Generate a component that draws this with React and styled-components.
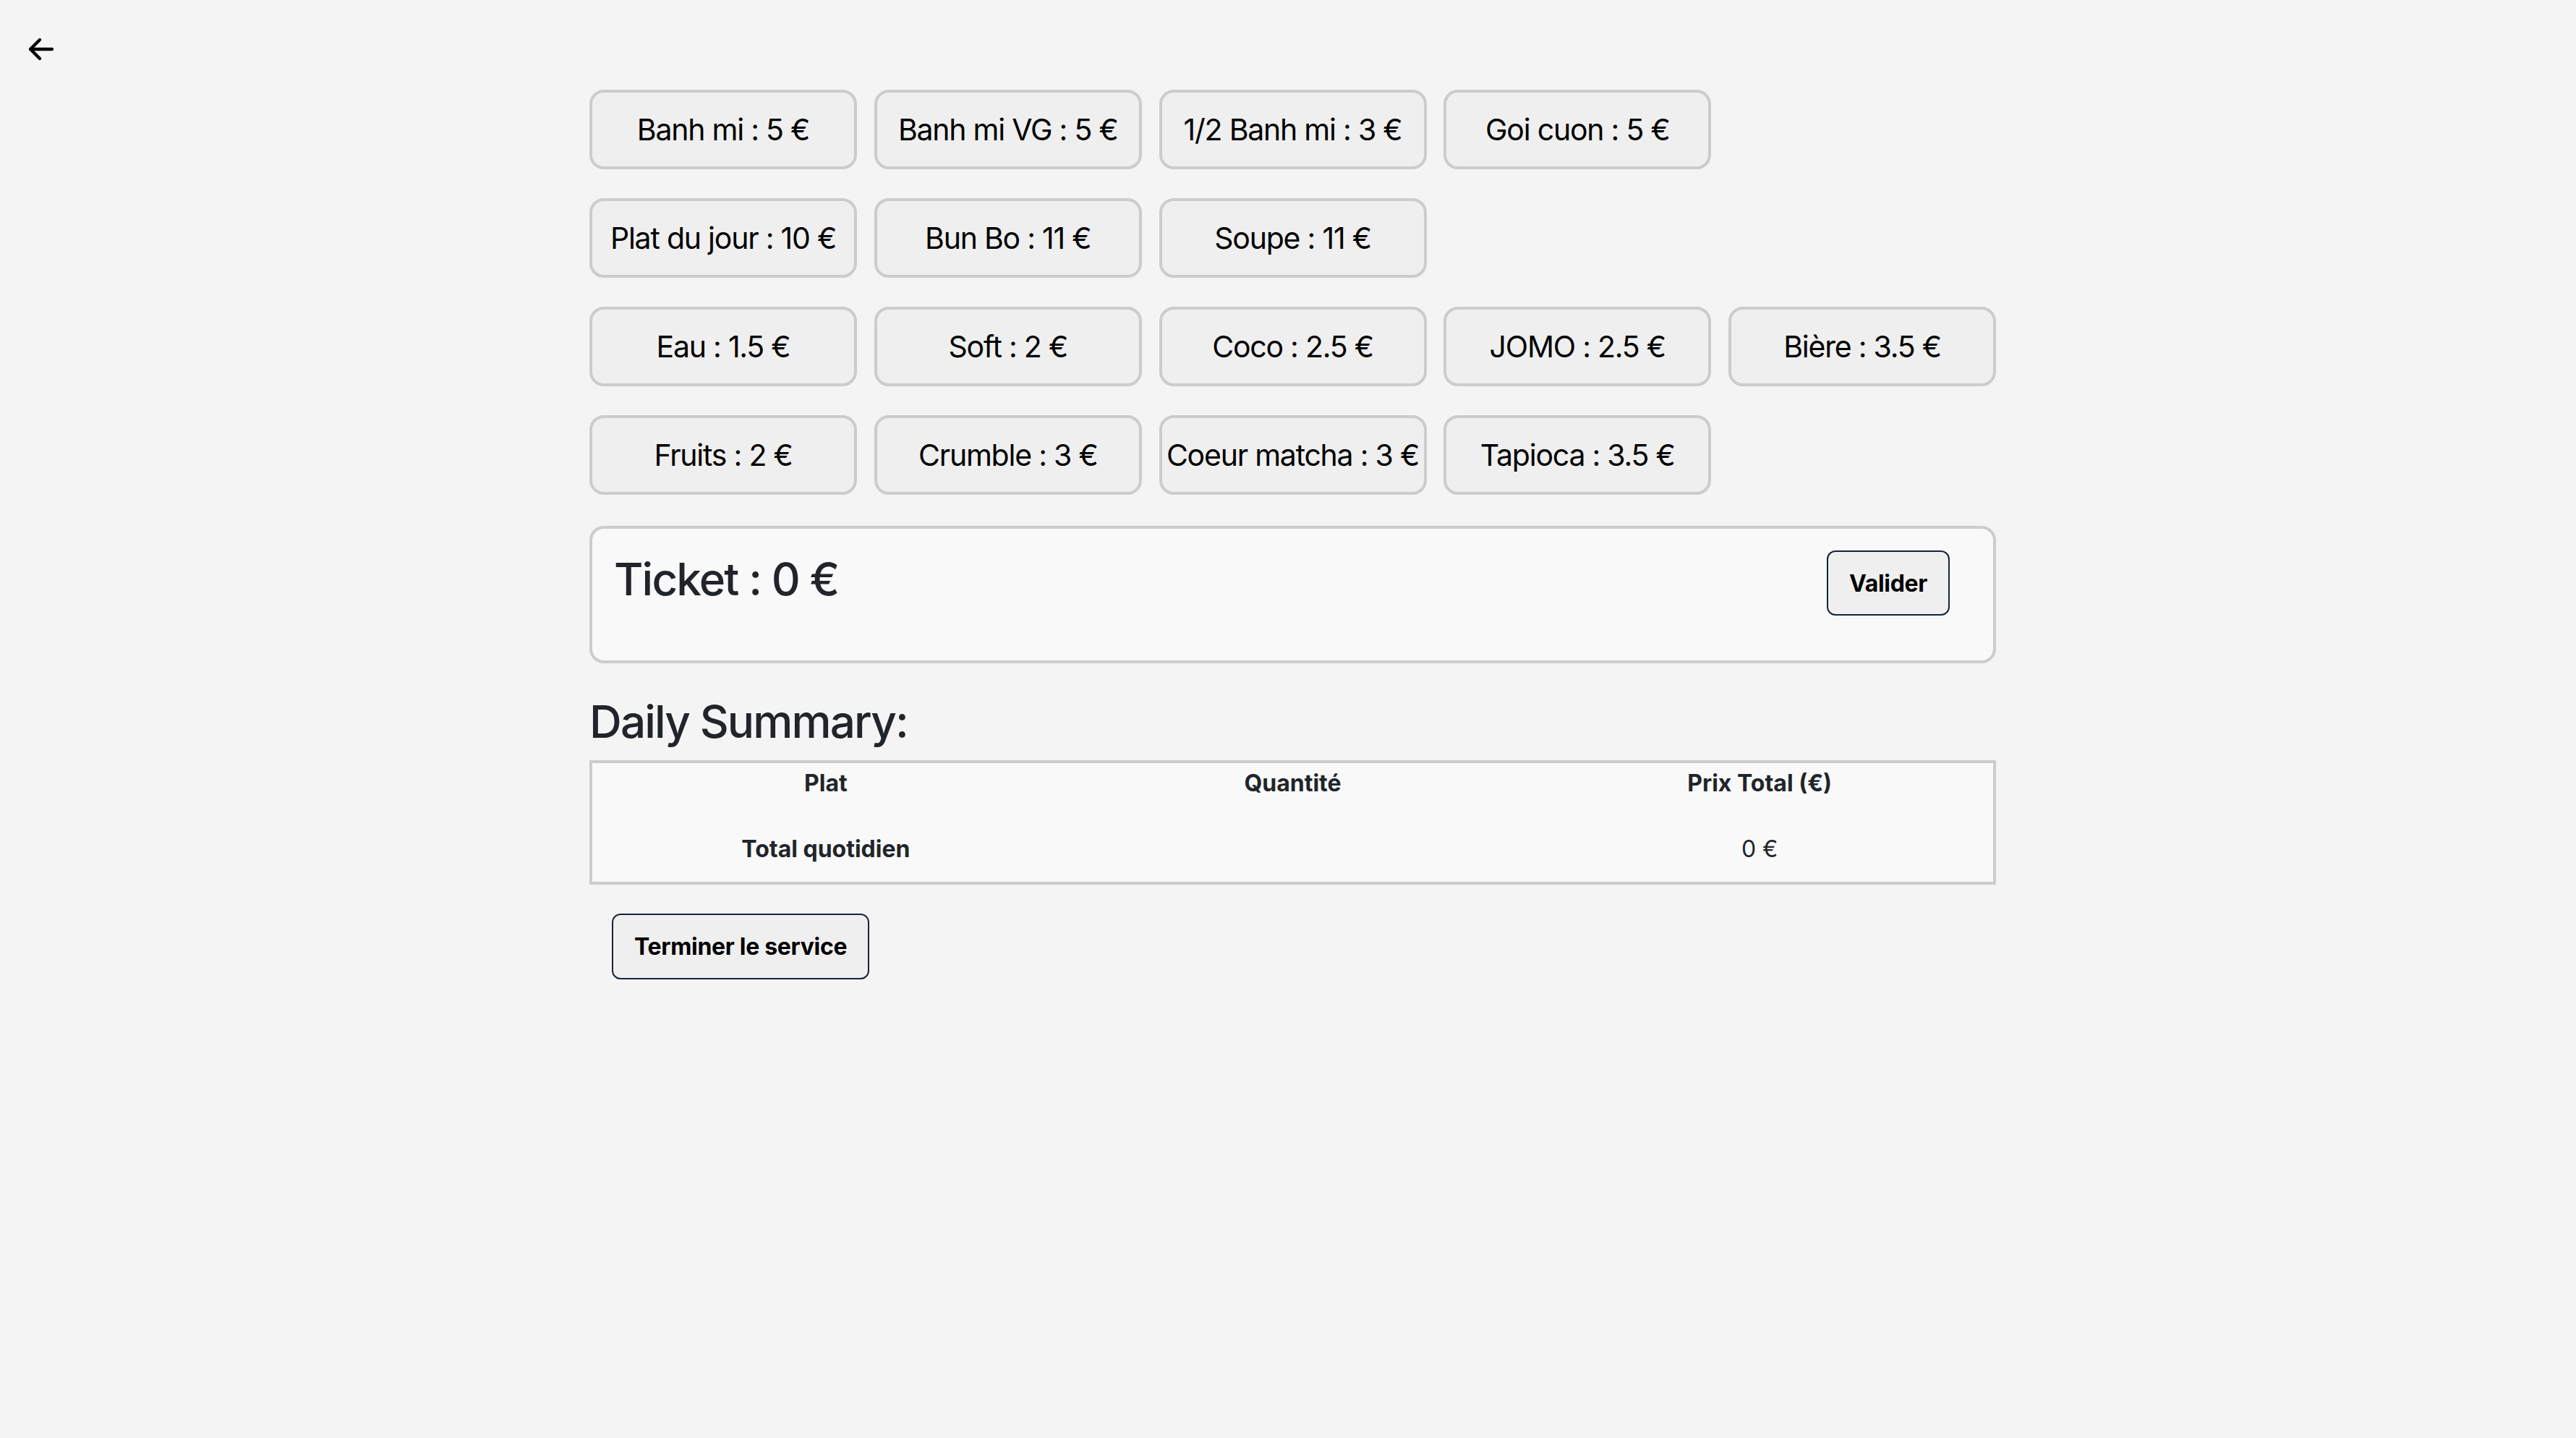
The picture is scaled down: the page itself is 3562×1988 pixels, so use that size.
import React from "react";
import styled, { createGlobalStyle } from "styled-components";

const GlobalStyle = createGlobalStyle`
  html, body {
    margin: 0;
    padding: 0;
    background: #f4f4f4;
    font-family: Inter, "Noto Sans", "Liberation Sans", sans-serif;
    color: #000;
  }
  * { box-sizing: border-box; }
`;

const Page = styled.div`
  min-height: 1988px;
  background: #f4f4f4;
`;

const Header = styled.header`
  display: flex;
  padding: 48px 0 0 37px;
  height: 124px;
`;

const BackButton = styled.button`
  width: 40px;
  height: 40px;
  padding: 0;
  border: none;
  background: transparent;
  cursor: pointer;
  display: flex;
`;

const Main = styled.main`
  width: 1945px;
  margin-left: 815px;
  display: flex;
  flex-direction: column;
`;

const Menu = styled.div`
  display: flex;
  flex-direction: column;
  gap: 40px;
`;

const MenuRow = styled.div`
  display: flex;
  gap: 23.75px;
`;

const ItemButton = styled.button`
  width: 370px;
  height: 110px;
  border: 4px solid #cccccc;
  border-radius: 20px;
  background: #efefef;
  color: #000;
  font-family: Inter, "Noto Sans", sans-serif;
  font-size: 41px;
  letter-spacing: -0.03em;
  padding: 0;
  white-space: nowrap;
  cursor: pointer;
`;

const Ticket = styled.section`
  margin-top: 43px;
  border: 4px solid #cccccc;
  border-radius: 20px;
  background: #f9f9f9;
  padding: 30px;
  display: flex;
  justify-content: space-between;
  align-items: flex-start;
`;

const TicketTitle = styled.h2`
  margin: 2px 0 45px;
  font-size: 62px;
  font-weight: 500;
  letter-spacing: -0.03em;
  color: #212529;
`;

const ActionButton = styled.button`
  height: ${(p) => p.$h}px;
  padding: 0 ${(p) => p.$px}px;
  margin: ${(p) => p.$margin};
  border: 2px solid #18233a;
  border-radius: 12px;
  background: #efefef;
  color: #000;
  font-family: Inter, "Noto Sans", sans-serif;
  font-size: 32px;
  font-weight: 700;
  letter-spacing: -0.01em;
  cursor: pointer;
  align-self: flex-start;
`;

const SectionTitle = styled.h2`
  margin: 43px 0 16px;
  font-size: 62px;
  font-weight: 500;
  letter-spacing: -0.03em;
  color: #212529;
`;

const SummaryTable = styled.table`
  width: 100%;
  border: 4px solid #cccccc;
  background: #f9f9f9;
  border-spacing: 0;
  table-layout: fixed;
  font-size: 32px;
  color: #212529;
`;

const HeadCell = styled.th`
  padding: 8px;
  font-weight: 700;
  text-align: center;
`;

const TotalCell = styled.td`
  padding: 44px 8px 26px;
  text-align: center;
  font-weight: ${(p) => (p.$bold ? 700 : 400)};
`;

const menu = [
  ["Banh mi : 5 €", "Banh mi VG : 5 €", "1/2 Banh mi : 3 €", "Goi cuon : 5 €"],
  ["Plat du jour : 10 €", "Bun Bo : 11 €", "Soupe : 11 €"],
  ["Eau : 1.5 €", "Soft : 2 €", "Coco : 2.5 €", "JOMO : 2.5 €", "Bière : 3.5 €"],
  ["Fruits : 2 €", "Crumble : 3 €", "Coeur matcha : 3 €", "Tapioca : 3.5 €"],
];

function ArrowLeft() {
  return (
    <svg width="40" height="40" viewBox="0 0 40 40" fill="none">
      <path
        d="M18 7 L5 20 L18 33 M5 20 H35"
        stroke="#000"
        strokeWidth="4.3"
        strokeLinecap="round"
        strokeLinejoin="round"
      />
    </svg>
  );
}

export default function App() {
  return (
    <Page>
      <GlobalStyle />
      <Header>
        <BackButton aria-label="Retour">
          <ArrowLeft />
        </BackButton>
      </Header>
      <Main>
        <Menu>
          {menu.map((row, i) => (
            <MenuRow key={i}>
              {row.map((item) => (
                <ItemButton key={item}>{item}</ItemButton>
              ))}
            </MenuRow>
          ))}
        </Menu>
        <Ticket>
          <TicketTitle>Ticket : 0 €</TicketTitle>
          <ActionButton $h={90} $px={29} $margin="0 30px 0 0">
            Valider
          </ActionButton>
        </Ticket>
        <SectionTitle>Daily Summary:</SectionTitle>
        <SummaryTable>
          <thead>
            <tr>
              <HeadCell>Plat</HeadCell>
              <HeadCell>Quantité</HeadCell>
              <HeadCell>Prix Total (€)</HeadCell>
            </tr>
          </thead>
          <tfoot>
            <tr>
              <TotalCell $bold>Total quotidien</TotalCell>
              <TotalCell />
              <TotalCell>0 €</TotalCell>
            </tr>
          </tfoot>
        </SummaryTable>
        <ActionButton $h={91} $px={29} $margin="40px 0 0 31px">
          Terminer le service
        </ActionButton>
      </Main>
    </Page>
  );
}
